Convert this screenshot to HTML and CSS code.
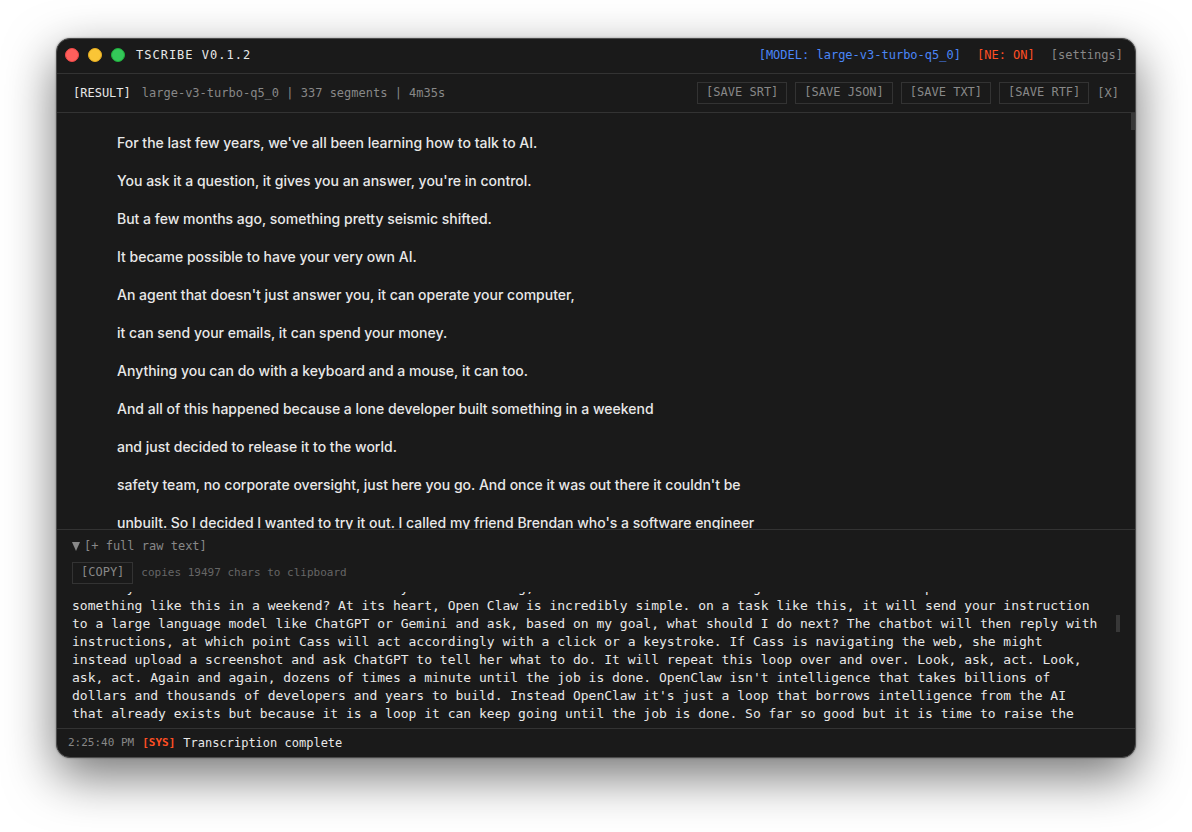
FILE: index.html
```html
<!DOCTYPE html>
<html lang="en">
<head>
    <meta charset="UTF-8">
    <meta name="viewport" content="width=device-width, initial-scale=1.0">
    <title>TScribe</title>
    <link rel="stylesheet" href="styles.css">
</head>
<body>
    <div class="window">
        <header class="titlebar">
            <div class="traffic-lights">
                <button class="light close" aria-label="Close"></button>
                <button class="light minimize" aria-label="Minimize"></button>
                <button class="light zoom" aria-label="Zoom"></button>
            </div>
            <h1>TSCRIBE V0.1.2</h1>
            <div class="titlebar-right">
                <button class="link model">[MODEL: large-v3-turbo-q5_0]</button>
                <button class="link engine">[NE: ON]</button>
                <button class="link">[settings]</button>
            </div>
        </header>

        <div class="toolbar">
            <h2>[RESULT]</h2>
            <span class="meta">large-v3-turbo-q5_0 | 337 segments | 4m35s</span>
            <div class="actions">
                <button class="btn">[SAVE SRT]</button>
                <button class="btn">[SAVE JSON]</button>
                <button class="btn">[SAVE TXT]</button>
                <button class="btn">[SAVE RTF]</button>
                <button class="link dismiss">[X]</button>
            </div>
        </div>

        <main class="transcript">
            <p>For the last few years, we've all been learning how to talk to AI.</p>
            <p>You ask it a question, it gives you an answer, you're in control.</p>
            <p>But a few months ago, something pretty seismic shifted.</p>
            <p>It became possible to have your very own AI.</p>
            <p>An agent that doesn't just answer you, it can operate your computer,</p>
            <p>it can send your emails, it can spend your money.</p>
            <p>Anything you can do with a keyboard and a mouse, it can too.</p>
            <p>And all of this happened because a lone developer built something in a weekend</p>
            <p>and just decided to release it to the world.</p>
            <p>safety team, no corporate oversight, just here you go. And once it was out there it couldn't be</p>
            <p>unbuilt. So I decided I wanted to try it out. I called my friend Brendan who's a software engineer</p>
            <span class="thumb"></span>
        </main>

        <details class="raw" open>
            <summary>
                <svg class="arrow" viewBox="0 0 8 9" aria-hidden="true"><path d="M0 0h8L4 9z"/></svg>
                [+ full raw text]
            </summary>
            <div class="copy-row">
                <button class="btn" id="copy">[COPY]</button>
                <label for="copy">copies 19497 chars to clipboard</label>
            </div>
            <div class="raw-text">
                <p>So today the tool has taken the world and you want a thing, and how can one man beat big tech while he sets up and can build something like this in a weekend? At its heart, Open Claw is incredibly simple. on a task like this, it will send your instruction to a large language model like ChatGPT or Gemini and ask, based on my goal, what should I do next? The chatbot will then reply with instructions, at which point Cass will act accordingly with a click or a keystroke. If Cass is navigating the web, she might instead upload a screenshot and ask ChatGPT to tell her what to do. It will repeat this loop over and over. Look, ask, act. Look, ask, act. Again and again, dozens of times a minute until the job is done. OpenClaw isn't intelligence that takes billions of dollars and thousands of developers and years to build. Instead OpenClaw it's just a loop that borrows intelligence from the AI that already exists but because it is a loop it can keep going until the job is done. So far so good but it is time to raise the</p>
                <span class="thumb"></span>
            </div>
        </details>

        <footer class="status">
            <time>2:25:40 PM</time>
            <strong>[SYS]</strong>
            <span>Transcription complete</span>
        </footer>
    </div>
</body>
</html>
```
FILE: styles.css
```css
* {
    box-sizing: border-box;
}
body {
    margin: 0;
    padding: 38px 56px 74px;
    height: 100vh;
    background-color: #fff;
    color: #e8e8e8;
    font-family: "DejaVu Sans Mono", monospace;
    font-size: 12px;
    line-height: 18px;
}
h1, h2, p {
    margin: 0;
    font-size: inherit;
    font-weight: normal;
}
button {
    margin: 0;
    padding: 0;
    border: none;
    background: none;
    color: #888;
    font: inherit;
    cursor: pointer;
}
.window {
    display: flex;
    flex-direction: column;
    height: 100%;
    overflow: hidden;
    border: 1px solid #4c4c4c;
    border-radius: 14px;
    background-color: #1a1a1a;
    box-shadow: 0 0 2px rgba(0, 0, 0, 0.4), 0 18px 50px rgba(0, 0, 0, 0.55);
}

/* title bar */
.titlebar {
    display: flex;
    align-items: center;
    flex: none;
    height: 35px;
    padding: 0 12px 2px 8px;
    border-bottom: 1px solid #333;
}
.traffic-lights {
    display: flex;
    gap: 9px;
    margin-right: 11px;
}
.light {
    width: 14px;
    height: 14px;
    border-radius: 50%;
}
.close {
    background-color: #ff5f5c;
    border: 1px solid #f04848;
}
.minimize {
    background-color: #fac536;
    border: 1px solid #e5ac20;
}
.zoom {
    background-color: #34c759;
    border: 1px solid #1fae3c;
}
.titlebar h1 {
    letter-spacing: 1px;
}
.titlebar-right {
    display: flex;
    gap: 16px;
    margin-left: auto;
}
.titlebar .model {
    color: #4a86f7;
}
.titlebar .engine {
    color: #ff4f24;
}

/* result bar */
.toolbar {
    display: flex;
    align-items: center;
    flex: none;
    height: 39px;
    padding: 0 16px;
    border-bottom: 1px solid #333;
}
.meta {
    margin-left: 11px;
    color: #888;
}
.actions {
    display: flex;
    align-items: center;
    gap: 8px;
    margin-left: auto;
}
.btn {
    height: 22px;
    padding: 0 8px 2px;
    border: 1px solid #333;
}

/* segments */
.transcript {
    position: relative;
    flex: 1;
    min-height: 0;
    overflow: hidden;
    padding: 11px 60px 0;
    font-family: Inter, sans-serif;
    font-size: 14px;
    font-weight: 500;
    line-height: 24px;
}
.transcript p {
    padding: 7px 0;
    font-weight: inherit;
}
.thumb {
    position: absolute;
    top: 0;
    right: 0;
    width: 4px;
    height: 17px;
    background-color: #383838;
}

/* raw text */
.raw {
    flex: none;
    padding: 7px 15px 5px;
    border-top: 1px solid #333;
}
.raw summary {
    display: flex;
    align-items: center;
    gap: 4px;
    list-style: none;
    color: #888;
    cursor: pointer;
}
.arrow {
    width: 8px;
    height: 9px;
    fill: #888;
}
.copy-row {
    display: flex;
    align-items: center;
    gap: 8px;
    margin: 7px 0 8px;
}
.copy-row label {
    color: #666;
    font-size: 11px;
}
.raw-text {
    position: relative;
    display: flex;
    flex-direction: column;
    justify-content: flex-end;
    height: 131px;
    overflow: hidden;
    font-size: 13px;
}
.raw-text p {
    max-width: 131ch;
}
.raw-text .thumb {
    top: 23px;
}

/* status line */
.status {
    display: flex;
    align-items: center;
    flex: none;
    gap: 8px;
    height: 29px;
    padding: 0 11px;
    border-top: 1px solid #333;
}
.status time {
    color: #888;
    font-size: 11px;
}
.status strong {
    color: #ff4f24;
    font-size: 11px;
}
```
